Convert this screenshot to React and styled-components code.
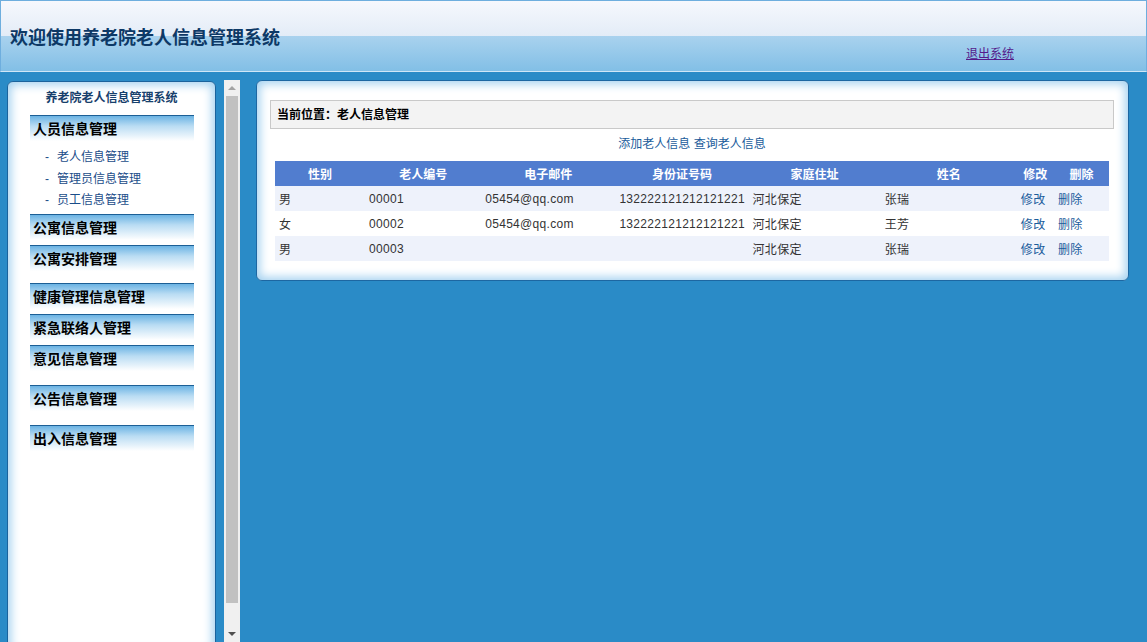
import React from 'react'
import styled, { createGlobalStyle } from 'styled-components'

const GlobalStyle = createGlobalStyle`
  html, body {
    margin: 0;
    padding: 0;
    height: 100%;
    overflow: hidden;
    background: #2a8bc7;
    font-family: "Liberation Sans", "Noto Sans CJK SC", sans-serif;
    font-size: 12px;
  }
  #root {
    height: 100%;
  }
`

const Page = styled.div`
  height: 100vh;
  display: flex;
  flex-direction: column;
`

const Header = styled.div`
  height: 70px;
  flex-shrink: 0;
  border: 1px solid #6eaede;
  border-bottom-color: #cfe6f6;
  background: linear-gradient(
    #f6f8fd 0%,
    #e3ecf7 50%,
    #a9d2ee 50%,
    #82bfe6 100%
  );
  display: flex;
  position: relative;
`

const Title = styled.h1`
  margin: 0;
  padding: 25px 0 0 9px;
  font-size: 18px;
  line-height: 24px;
  font-weight: bold;
  color: #0d3966;
`

const Logout = styled.a`
  position: absolute;
  left: 965px;
  top: 45px;
  font-size: 12px;
  line-height: 16px;
  color: #551a8b;
  text-decoration: underline;
  cursor: pointer;
`

const Body = styled.div`
  flex: 1;
  display: flex;
  align-items: stretch;
  padding-top: 8px;
  min-height: 0;
`

const Sidebar = styled.div`
  width: 207px;
  margin-left: 7px;
  margin-top: 1px;
  margin-bottom: -12px;
  background: #fff;
  border: 1px solid #1b639c;
  border-radius: 6px;
  box-shadow: inset 0 0 10px 3px #a6d2f0;
  display: flex;
  flex-direction: column;
`

const SideTitle = styled.div`
  height: 33px;
  line-height: 32px;
  text-align: center;
  font-size: 12px;
  font-weight: bold;
  color: #17406c;
`

const Menu = styled.div`
  margin: 0 21px ${p => p.gap}px 22px;
`

const MenuHead = styled.div`
  height: 25px;
  line-height: 26px;
  border-top: 1px solid #1c5f95;
  background: linear-gradient(#6bb3e3 0%, #b9dcf3 40%, #ffffff 100%);
  padding-left: 3px;
  font-size: 14px;
  font-weight: bold;
  color: #000;
`

const SubList = styled.ul`
  list-style: none;
  margin: 0;
  padding: 6px 0 2px 15px;
`

const SubItem = styled.li`
  height: 21.5px;
  line-height: 21px;
  font-size: 12px;
  color: #1b4d89;
  white-space: nowrap;

  span {
    display: inline-block;
    width: 12px;
  }
`

const ScrollBar = styled.div`
  width: 16px;
  margin-left: 8px;
  background: #f0f0f0;
  display: flex;
  flex-direction: column;
  align-items: center;
`

const Arrow = styled.div`
  height: 16px;
  width: 16px;
  flex-shrink: 0;
  display: flex;
  align-items: center;
  justify-content: center;

  &::after {
    content: '';
    border-left: 4px solid transparent;
    border-right: 4px solid transparent;
    ${p => p.down
      ? 'border-top: 4px solid #505050;'
      : 'border-bottom: 4px solid #a3a3a3;'}
  }
`

const Thumb = styled.div`
  width: 12px;
  height: 507px;
  background: #c1c1c1;
`

const Main = styled.div`
  flex: 1;
  align-self: flex-start;
  margin: 0 18px 0 16px;
  background: #fff;
  border: 1px solid #1d67a2;
  border-radius: 6px;
  box-shadow: inset 0 0 10px 3px #a6d2f0;
  padding: 19px 14px 19px 13px;
`

const Crumb = styled.div`
  height: 27px;
  line-height: 28px;
  background: #f3f3f3;
  border: 1px solid #c9c9c9;
  padding-left: 6px;
  font-size: 12px;
  font-weight: bold;
  color: #000;
`

const Actions = styled.div`
  height: 32px;
  line-height: 30px;
  text-align: center;
  font-size: 12px;
  color: #1a5c9b;

  a {
    color: #1a5c9b;
    cursor: pointer;
  }
`

const Table = styled.table`
  margin: 0 5px;
  width: calc(100% - 10px);
  border-collapse: collapse;
  table-layout: fixed;
`

const Th = styled.th`
  height: 25px;
  padding: 0;
  background: #517dcf;
  color: #fff;
  font-size: 12px;
  font-weight: bold;
  text-align: center;
`

const Row = styled.tr`
  background: ${p => (p.alt ? '#eef2fb' : '#fff')};
`

const Td = styled.td`
  height: 25px;
  padding: 0 0 0 4px;
  font-size: 12px;
  letter-spacing: 0.3px;
  color: #333;
  white-space: nowrap;
  overflow: hidden;
`

const Op = styled.a`
  color: #1a5c9b;
  cursor: pointer;
`

const menus = [
  { name: '人员信息管理', gap: 0, items: ['老人信息管理', '管理员信息管理', '员工信息管理'] },
  { name: '公寓信息管理', gap: 5 },
  { name: '公寓安排管理', gap: 12 },
  { name: '健康管理信息管理', gap: 5 },
  { name: '紧急联络人管理', gap: 5 },
  { name: '意见信息管理', gap: 14 },
  { name: '公告信息管理', gap: 14 },
  { name: '出入信息管理', gap: 0 },
]

const columns = [
  { title: '性别', width: 90 },
  { title: '老人编号', width: 116 },
  { title: '电子邮件', width: 134 },
  { title: '身份证号码', width: 133 },
  { title: '家庭住址', width: 132 },
  { title: '姓名', width: 136 },
  { title: '修改', width: 37 },
  { title: '删除', width: 55 },
]

const rows = [
  { sex: '男', no: '00001', email: '05454@qq.com', id: '132222121212121221', addr: '河北保定', name: '张瑞' },
  { sex: '女', no: '00002', email: '05454@qq.com', id: '132222121212121221', addr: '河北保定', name: '王芳' },
  { sex: '男', no: '00003', email: '', id: '', addr: '河北保定', name: '张瑞' },
]

export default function App() {
  return (
    <Page>
      <GlobalStyle />
      <Header>
        <Title>欢迎使用养老院老人信息管理系统</Title>
        <Logout>退出系统</Logout>
      </Header>
      <Body>
        <Sidebar>
          <SideTitle>养老院老人信息管理系统</SideTitle>
          {menus.map(m => (
            <Menu key={m.name} gap={m.gap}>
              <MenuHead>{m.name}</MenuHead>
              {m.items && (
                <SubList>
                  {m.items.map(it => (
                    <SubItem key={it}>
                      <span>-</span>{it}
                    </SubItem>
                  ))}
                </SubList>
              )}
            </Menu>
          ))}
        </Sidebar>
        <ScrollBar>
          <Arrow />
          <Thumb />
          <div style={{ flex: 1 }} />
          <Arrow down />
        </ScrollBar>
        <Main>
          <Crumb>当前位置：老人信息管理</Crumb>
          <Actions>
            <a>添加老人信息</a> <a>查询老人信息</a>
          </Actions>
          <Table>
            <colgroup>
              {columns.map(c => (
                <col key={c.title} style={{ width: c.width }} />
              ))}
            </colgroup>
            <thead>
              <tr>
                {columns.map(c => (
                  <Th key={c.title}>{c.title}</Th>
                ))}
              </tr>
            </thead>
            <tbody>
              {rows.map((r, i) => (
                <Row key={r.no} alt={i % 2 === 0}>
                  <Td>{r.sex}</Td>
                  <Td>{r.no}</Td>
                  <Td>{r.email}</Td>
                  <Td>{r.id}</Td>
                  <Td>{r.addr}</Td>
                  <Td>{r.name}</Td>
                  <Td><Op>修改</Op></Td>
                  <Td><Op>删除</Op></Td>
                </Row>
              ))}
            </tbody>
          </Table>
        </Main>
      </Body>
    </Page>
  )
}
